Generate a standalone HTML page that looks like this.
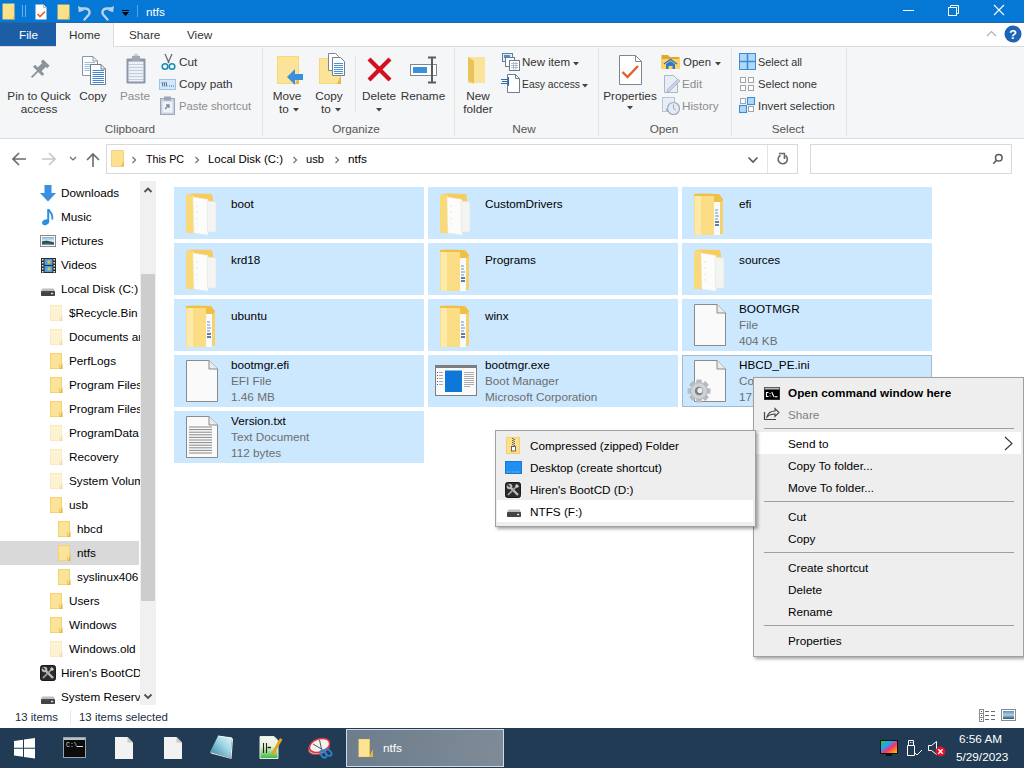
<!DOCTYPE html>
<html><head><meta charset="utf-8"><title>ntfs</title><style>
*{margin:0;padding:0;box-sizing:border-box}
html,body{width:1024px;height:768px;overflow:hidden}
body{position:relative;background:#fff;font-family:"Liberation Sans",sans-serif;font-size:12px;color:#000}
.a{position:absolute}
.t{position:absolute;white-space:nowrap;line-height:1}
</style></head><body>

<div class="a" style="left:0px;top:0px;width:1024px;height:23px;background:#0577d4"></div>
<div class="a" style="left:0px;top:22px;width:1024px;height:1px;background:#2766a6"></div>
<div class="t" style="left:146px;top:6.25px;font-size:11.75px;color:#fff;font-weight:normal;">ntfs</div>
<div class="a" style="left:903px;top:10px;width:11px;height:1px;background:#fff"></div>
<svg class="a" style="left:946px;top:3px;" width="14" height="14" viewBox="0 0 14 14"><rect x="2.5" y="4.5" width="8" height="8" fill="none" stroke="#fff"/><path d="M4.5 4.5V2.5H12.5V10.5H10.5" fill="none" stroke="#fff"/></svg>
<svg class="a" style="left:992px;top:3px;" width="14" height="14" viewBox="0 0 14 14"><path d="M2 2L12 12M12 2L2 12" stroke="#fff" stroke-width="1.1"/></svg>
<svg class="a" style="left:2px;top:3px;" width="14" height="17" viewBox="0 0 14 17"><path d="M0.5 0.5H12.5V16.5H0.5Z" fill="#f9d66c"/><path d="M1 1H12V16H1Z" fill="#fbe08a"/><path d="M12.5 10V16.5H10.5Z" fill="#e0b440"/></svg>
<div class="a" style="left:22px;top:5px;width:1px;height:12px;background:#6aaef0"></div>
<div class="a" style="left:25px;top:5px;width:1px;height:12px;background:#6aaef0"></div>
<svg class="a" style="left:35px;top:4px;" width="12" height="16" viewBox="0 0 12 16"><path d="M0.5 0.5H8.5L11.5 3.5V15.5H0.5Z" fill="#fff"/><path d="M8.5 0.5V3.5H11.5" fill="none" stroke="#aaa" stroke-width="0.8"/><path d="M2.5 10L5 12.5L10 7.5" fill="none" stroke="#e0622c" stroke-width="1.6"/></svg>
<svg class="a" style="left:57px;top:4px;" width="14" height="16" viewBox="0 0 14 16"><path d="M0.5 0.5H12.5V15.5H0.5Z" fill="#f9d66c"/><path d="M1 1H12V15H1Z" fill="#fbe08a"/><path d="M12.5 9V15.5H10.5Z" fill="#e0b440"/></svg>
<svg class="a" style="left:77px;top:4px;" width="15" height="17" viewBox="0 0 15 17"><path d="M3.5 4.5H8C12.5 4.5 13.5 8.5 11.5 11L7.5 15.5" fill="none" stroke="#b8d0ee" stroke-width="2.4" stroke-linecap="round"/><path d="M1 1.5L1.8 8.2L7 6.5Z" fill="#b8d0ee"/></svg>
<svg class="a" style="left:100px;top:4px;" width="15" height="17" viewBox="0 0 15 17"><path d="M11.5 4.5H7C2.5 4.5 1.5 8.5 3.5 11L7.5 15.5" fill="none" stroke="#b8d0ee" stroke-width="2.4" stroke-linecap="round"/><path d="M14 1.5L13.2 8.2L8 6.5Z" fill="#b8d0ee"/></svg>
<div class="a" style="left:122px;top:10px;width:7px;height:1px;background:#000"></div>
<svg class="a" style="left:122px;top:12px;" width="7" height="4" viewBox="0 0 7 4"><path d="M0 0H7L3.5 4Z" fill="#000"/></svg>
<div class="a" style="left:137px;top:5px;width:1px;height:12px;background:#5aa3ea"></div>
<div class="a" style="left:0px;top:23px;width:1024px;height:24px;background:#fff;border-bottom:1px solid #dadbdc"></div>
<div class="a" style="left:0px;top:23px;width:56px;height:23px;background:#1c5ea6"></div>
<div class="t" style="left:19px;top:29.25px;font-size:11.75px;color:#fff;font-weight:normal;">File</div>
<div class="a" style="left:56px;top:23px;width:58px;height:24px;background:#f5f6f7;border-right:1px solid #dadbdc"></div>
<div class="t" style="left:69px;top:29.25px;font-size:11.75px;color:#333;font-weight:normal;">Home</div>
<div class="t" style="left:129px;top:29.25px;font-size:11.75px;color:#333;font-weight:normal;">Share</div>
<div class="t" style="left:187px;top:29.25px;font-size:11.75px;color:#333;font-weight:normal;">View</div>
<div class="a" style="left:0px;top:47px;width:1024px;height:92px;background:#f5f6f7;border-bottom:1px solid #dadbdc"></div>
<svg class="a" style="left:28px;top:59px;" width="22" height="22" viewBox="0 0 22 22"><g transform="rotate(45 11 11)" fill="#8a949c"><rect x="6.5" y="0.5" width="9" height="3.5"/><rect x="8.3" y="3.5" width="5.4" height="7"/><rect x="4.5" y="10" width="13" height="3"/><rect x="10.1" y="12.5" width="1.8" height="9"/></g></svg>
<svg class="a" style="left:82px;top:56px;" width="25" height="30" viewBox="0 0 25 30"><path d="M0.5 0.5H11L15.5 5V19.5H0.5Z" fill="#fff" stroke="#8a96a3"/><path d="M11 0.5V5H15.5" fill="none" stroke="#8a96a3"/><g stroke="#9cbfe4"><path d="M2.5 6.5H13M2.5 8.5H13M2.5 10.5H13M2.5 12.5H13M2.5 14.5H8"/></g><path d="M8.5 8.5H19L23.5 13V28.5H8.5Z" fill="#fff" stroke="#6f7d8c"/><path d="M19 8.5V13H23.5" fill="none" stroke="#6f7d8c"/><g stroke="#3f86d6"><path d="M10.5 14.5H22M10.5 16.5H22M10.5 18.5H22M10.5 20.5H22M10.5 22.5H22M10.5 24.5H22M10.5 26.5H22"/></g></svg>
<svg class="a" style="left:125px;top:54px;" width="23" height="31" viewBox="0 0 23 31"><rect x="1.5" y="4.5" width="19" height="25" fill="#8b97a8" rx="1"/><rect x="3.5" y="7.5" width="15" height="20" fill="#eef0f7"/><g stroke="#c3cde0"><path d="M4 10.5H18M4 13.5H18M4 16.5H18M4 19.5H18M4 22.5H18M4 25.5H18"/></g><rect x="7" y="2" width="8" height="5" fill="#9ea9b8"/><circle cx="11" cy="2.5" r="2" fill="none" stroke="#9ea9b8"/></svg>
<div class="t" style="left:-61px;width:200px;text-align:center;top:90.25px;font-size:11.75px;color:#333">Pin to Quick</div>
<div class="t" style="left:-61px;width:200px;text-align:center;top:103.25px;font-size:11.75px;color:#333">access</div>
<div class="t" style="left:-7px;width:200px;text-align:center;top:90.25px;font-size:11.75px;color:#333">Copy</div>
<div class="t" style="left:35px;width:200px;text-align:center;top:90.25px;font-size:11.75px;color:#8d8d8d">Paste</div>
<svg class="a" style="left:161px;top:53px;" width="15" height="18" viewBox="0 0 15 18"><path d="M4 1L8 10M11 1L7 10" stroke="#5b6670" stroke-width="1.2"/><circle cx="4" cy="13.5" r="2.8" fill="none" stroke="#1b8bb8" stroke-width="1.6"/><circle cx="11" cy="13.5" r="2.8" fill="none" stroke="#1b8bb8" stroke-width="1.6"/></svg>
<div class="t" style="left:179px;top:56.25px;font-size:11.75px;color:#333;font-weight:normal;">Cut</div>
<svg class="a" style="left:159px;top:79px;" width="17" height="11" viewBox="0 0 17 11"><rect x="0.5" y="0.5" width="16" height="10" fill="#d6e8f8" stroke="#9ec3e6"/><path d="M3 3L4 7.5M5 3L6 7.5M7 3L8 7.5" stroke="#3b6ea8"/><path d="M10 7H11M12 7H13M14 7H15" stroke="#3b6ea8"/></svg>
<div class="t" style="left:179px;top:78.25px;font-size:11.75px;color:#333;font-weight:normal;">Copy path</div>
<svg class="a" style="left:160px;top:96px;" width="15" height="19" viewBox="0 0 15 19"><rect x="0.5" y="2.5" width="14" height="16" fill="#c9d2de" stroke="#9aa6b6"/><rect x="2.5" y="5.5" width="10" height="11" fill="#f0f2f7"/><rect x="4" y="0.5" width="7" height="4" fill="#9aa6b6"/><path d="M5 13L9 9M6 9H9V12" fill="none" stroke="#7d8a9b" stroke-width="1.4"/></svg>
<div class="t" style="left:179px;top:100.25px;font-size:11.75px;color:#8d8d8d;font-weight:normal;transform:scaleX(0.959);transform-origin:0 0;">Paste shortcut</div>
<div class="t" style="left:30px;width:200px;text-align:center;top:123.25px;font-size:11.75px;color:#555">Clipboard</div>
<div class="a" style="left:262px;top:48px;width:1px;height:88px;background:#e2e3e4"></div>
<svg class="a" style="left:276px;top:55px;" width="28" height="30" viewBox="0 0 28 30"><rect x="1" y="1" width="22" height="28" fill="#f8d775"/><rect x="2" y="2" width="20" height="26" fill="#fbe39a"/><path d="M23 20V29H19Z" fill="#e6b94a"/><path d="M11 22L19 14V19H27V25H19V30Z" fill="#3c8fdc"/></svg>
<div class="t" style="left:187px;width:200px;text-align:center;top:90.25px;font-size:11.75px;color:#333">Move</div>
<div class="t" style="left:184px;width:200px;text-align:center;top:103.25px;font-size:11.75px;color:#333">to</div>
<svg class="a" style="left:293px;top:108px;" width="6" height="4" viewBox="0 0 6 4"><path d="M0 0H6L3 3.5Z" fill="#444"/></svg>
<svg class="a" style="left:318px;top:53px;" width="28" height="32" viewBox="0 0 28 32"><rect x="1" y="5" width="22" height="26" fill="#f8d775"/><rect x="2" y="6" width="20" height="24" fill="#fbe39a"/><path d="M23 22V31H19Z" fill="#e6b94a"/><path d="M10.5 0.5H17.5L20.5 3.5V17.5H10.5Z" fill="#fff" stroke="#7d8794"/><path d="M14.5 4.5H22.5L26.5 8.5V22.5H14.5Z" fill="#fff" stroke="#6f7d8c"/><g stroke="#4a90d9"><path d="M16 10.5H25M16 12.5H25M16 14.5H25M16 16.5H25M16 18.5H25M16 20.5H25"/></g></svg>
<div class="t" style="left:229px;width:200px;text-align:center;top:90.25px;font-size:11.75px;color:#333">Copy</div>
<div class="t" style="left:226px;width:200px;text-align:center;top:103.25px;font-size:11.75px;color:#333">to</div>
<svg class="a" style="left:335px;top:108px;" width="6" height="4" viewBox="0 0 6 4"><path d="M0 0H6L3 3.5Z" fill="#444"/></svg>
<div class="a" style="left:355px;top:56px;width:1px;height:56px;background:#e2e3e4"></div>
<svg class="a" style="left:366px;top:56px;" width="27" height="27" viewBox="0 0 27 27"><path d="M3 3L24 24M24 3L3 24" stroke="#d2101e" stroke-width="4.2"/></svg>
<div class="t" style="left:279px;width:200px;text-align:center;top:90.25px;font-size:11.75px;color:#333">Delete</div>
<svg class="a" style="left:376px;top:108px;" width="6" height="4" viewBox="0 0 6 4"><path d="M0 0H6L3 3.5Z" fill="#444"/></svg>
<svg class="a" style="left:409px;top:56px;" width="31" height="28" viewBox="0 0 31 28"><rect x="1.5" y="8.5" width="26" height="11" fill="#fff" stroke="#7c8794"/><rect x="4" y="11" width="14" height="6" fill="#3b8fdc"/><path d="M19 1.5H23V26.5H19M27 1.5H23M27 26.5H23M23 1.5V26.5" fill="none" stroke="#5b5b5b" stroke-width="2"/></svg>
<div class="t" style="left:323px;width:200px;text-align:center;top:90.25px;font-size:11.75px;color:#333">Rename</div>
<div class="t" style="left:256px;width:200px;text-align:center;top:123.25px;font-size:11.75px;color:#555">Organize</div>
<div class="a" style="left:454px;top:48px;width:1px;height:88px;background:#e2e3e4"></div>
<svg class="a" style="left:466px;top:56px;" width="22" height="29" viewBox="0 0 22 29"><path d="M2 1H19V27H2Z" fill="#f8d775"/><path d="M4 1H19V27H8L4 23Z" fill="#fbe39a"/><path d="M2 1L8 5V28L2 24Z" fill="#e8c25a"/></svg>
<div class="t" style="left:378px;width:200px;text-align:center;top:90.25px;font-size:11.75px;color:#333">New</div>
<div class="t" style="left:378px;width:200px;text-align:center;top:103.25px;font-size:11.75px;color:#333">folder</div>
<svg class="a" style="left:502px;top:53px;" width="18" height="18" viewBox="0 0 18 18"><rect x="0.5" y="0.5" width="10" height="8" fill="#dfeefb" stroke="#6b7c8e"/><rect x="2" y="2" width="6" height="3" fill="#4a90d9"/><rect x="3.5" y="4.5" width="9" height="9" fill="#fff" stroke="#6b7c8e"/><rect x="7.5" y="7.5" width="10" height="10" fill="#fff" stroke="#6b7c8e"/><path d="M9 10.5H16M9 12.5H16M9 14.5H16M11.5 9V17M14 9V17" stroke="#9aa6b6" stroke-width="0.7"/></svg>
<div class="t" style="left:522px;top:56.25px;font-size:11.75px;color:#333;font-weight:normal;transform:scaleX(0.980);transform-origin:0 0;">New item</div>
<svg class="a" style="left:573px;top:62px;" width="6" height="4" viewBox="0 0 6 4"><path d="M0 0H6L3 3.5Z" fill="#444"/></svg>
<svg class="a" style="left:501px;top:74px;" width="19" height="19" viewBox="0 0 19 19"><path d="M6.5 0.5H14.5L18.5 4.5V18.5H6.5Z" fill="#fff" stroke="#6f7d8c"/><path d="M14.5 0.5V4.5H18.5" fill="none" stroke="#6f7d8c"/><path d="M0 5.5H8M1 7.5H8M0 9.5H8M7.5 3V12" stroke="#2b6cb0" stroke-width="1"/></svg>
<div class="t" style="left:522px;top:78.25px;font-size:11.75px;color:#333;font-weight:normal;transform:scaleX(0.879);transform-origin:0 0;">Easy access</div>
<svg class="a" style="left:582px;top:84px;" width="6" height="4" viewBox="0 0 6 4"><path d="M0 0H6L3 3.5Z" fill="#444"/></svg>
<div class="t" style="left:424px;width:200px;text-align:center;top:123.25px;font-size:11.75px;color:#555">New</div>
<div class="a" style="left:598px;top:48px;width:1px;height:88px;background:#e2e3e4"></div>
<svg class="a" style="left:619px;top:55px;" width="23" height="30" viewBox="0 0 23 30"><path d="M0.5 0.5H16.5L22.5 6.5V29.5H0.5Z" fill="#fff" stroke="#7d8794"/><path d="M16.5 0.5V6.5H22.5" fill="none" stroke="#7d8794"/><path d="M3.5 17L8.5 22L19 11" fill="none" stroke="#e0622c" stroke-width="2.4"/></svg>
<div class="t" style="left:530px;width:200px;text-align:center;top:90.25px;font-size:11.75px;color:#333">Properties</div>
<svg class="a" style="left:627px;top:106px;" width="6" height="4" viewBox="0 0 6 4"><path d="M0 0H6L3 3.5Z" fill="#444"/></svg>
<svg class="a" style="left:661px;top:54px;" width="19" height="16" viewBox="0 0 19 16"><path d="M0.5 1H7L9 3H18.5V15H0.5Z" fill="#e2a82e"/><rect x="0.5" y="5" width="18" height="10" fill="#fbd461"/><path d="M5 15V10L9.5 7L14 10V15H11.5V12H7.5V15Z" fill="#3579c6"/><path d="M3 10L9.5 5.5L16 10" fill="none" stroke="#3579c6" stroke-width="1.5"/></svg>
<div class="t" style="left:683px;top:56.25px;font-size:11.75px;color:#333;font-weight:normal;transform:scaleX(0.974);transform-origin:0 0;">Open</div>
<svg class="a" style="left:715px;top:62px;" width="6" height="4" viewBox="0 0 6 4"><path d="M0 0H6L3 3.5Z" fill="#444"/></svg>
<svg class="a" style="left:664px;top:75px;" width="17" height="18" viewBox="0 0 17 18"><path d="M0.5 0.5H9.5L13.5 4.5V17.5H0.5Z" fill="#e9eef6" stroke="#aab7c8"/><path d="M3 15L14 4L16 6L5 17H3Z" fill="#c8d3e2" stroke="#a1afc3" stroke-width="0.7"/></svg>
<div class="t" style="left:682px;top:78.25px;font-size:11.75px;color:#8d8d8d;font-weight:normal;">Edit</div>
<svg class="a" style="left:662px;top:97px;" width="18" height="18" viewBox="0 0 18 18"><rect x="0.5" y="0.5" width="12" height="14" fill="#e9eef6" stroke="#b9c5d4"/><circle cx="11.5" cy="11.5" r="6" fill="#e4ebf4" stroke="#9eacbf" stroke-width="1.2"/><path d="M11.5 7.5V11.5L14 13" fill="none" stroke="#9eacbf"/><path d="M4 12L6.5 14.5" stroke="#9eacbf" stroke-width="1.5"/></svg>
<div class="t" style="left:682px;top:100.25px;font-size:11.75px;color:#8d8d8d;font-weight:normal;">History</div>
<div class="t" style="left:564px;width:200px;text-align:center;top:123.25px;font-size:11.75px;color:#555">Open</div>
<div class="a" style="left:731px;top:48px;width:1px;height:88px;background:#e2e3e4"></div>
<svg class="a" style="left:739px;top:53px;" width="17" height="17" viewBox="0 0 17 17"><rect x="0.5" y="0.5" width="16" height="16" fill="#b3d8f6" stroke="#3a8ed9"/><path d="M8.5 1V16M1 8.5H16" stroke="#3a8ed9" stroke-width="1.6"/></svg>
<div class="t" style="left:758px;top:56.25px;font-size:11.75px;color:#333;font-weight:normal;transform:scaleX(0.923);transform-origin:0 0;">Select all</div>
<svg class="a" style="left:740px;top:77px;" width="15" height="15" viewBox="0 0 15 15"><g fill="#fff" stroke="#a4a4a4"><rect x="0.5" y="0.5" width="5" height="5"/><rect x="8.5" y="0.5" width="5" height="5"/><rect x="0.5" y="8.5" width="5" height="5"/><rect x="8.5" y="8.5" width="5" height="5"/></g></svg>
<div class="t" style="left:758px;top:78.25px;font-size:11.75px;color:#333;font-weight:normal;transform:scaleX(0.951);transform-origin:0 0;">Select none</div>
<svg class="a" style="left:739px;top:97px;" width="17" height="17" viewBox="0 0 17 17"><g fill="#fff" stroke="#a4a4a4"><rect x="1.5" y="1.5" width="5" height="5"/><rect x="9.5" y="9.5" width="5" height="5"/></g><g fill="#b3d8f6" stroke="#3a8ed9" stroke-width="1.1"><rect x="8.5" y="0.5" width="7" height="7"/><rect x="0.5" y="8.5" width="7" height="7"/></g></svg>
<div class="t" style="left:758px;top:100.25px;font-size:11.75px;color:#333;font-weight:normal;transform:scaleX(0.974);transform-origin:0 0;">Invert selection</div>
<div class="t" style="left:688px;width:200px;text-align:center;top:123.25px;font-size:11.75px;color:#555">Select</div>
<div class="a" style="left:846px;top:48px;width:1px;height:88px;background:#e2e3e4"></div>
<svg class="a" style="left:986px;top:30px;" width="11" height="7" viewBox="0 0 11 7"><path d="M1 6L5.5 1.5L10 6" fill="none" stroke="#b0b0b0" stroke-width="1.2"/></svg>
<svg class="a" style="left:1004px;top:25px;" width="18" height="18" viewBox="0 0 18 18"><circle cx="9" cy="9" r="8.5" fill="#1c64b4"/><text x="9" y="14" text-anchor="middle" font-family="Liberation Sans" font-weight="bold" font-size="13" fill="#fff">?</text></svg>
<div class="a" style="left:106px;top:144px;width:692px;height:30px;border:1px solid #d9d9d9;background:#fff"></div>
<div class="a" style="left:810px;top:144px;width:202px;height:30px;border:1px solid #d9d9d9;background:#fff"></div>
<svg class="a" style="left:12px;top:152px;" width="15" height="14" viewBox="0 0 15 14"><path d="M1 7H14M7 1L1 7L7 13" fill="none" stroke="#6b6b6b" stroke-width="1.6"/></svg>
<svg class="a" style="left:41px;top:152px;" width="15" height="14" viewBox="0 0 15 14"><path d="M14 7H1M8 1L14 7L8 13" fill="none" stroke="#c8c8c8" stroke-width="1.6"/></svg>
<svg class="a" style="left:69px;top:156px;" width="8" height="5" viewBox="0 0 8 5"><path d="M1 1L4 4L7 1" fill="none" stroke="#6b6b6b" stroke-width="1.2"/></svg>
<svg class="a" style="left:86px;top:152px;" width="14" height="15" viewBox="0 0 14 15"><path d="M7 15V2M1 8L7 2L13 8" fill="none" stroke="#6b6b6b" stroke-width="1.6"/></svg>
<svg class="a" style="left:111px;top:150px;" width="14" height="17" viewBox="0 0 14 17"><path d="M0.5 0.5H12.5V16.5H0.5Z" fill="#f8d775"/><path d="M1 1H12V16H1Z" fill="#fce18f"/><path d="M13 10V16.5H10Z" fill="#e6ba4c"/><path d="M0.5 0.5H12.5V16.5H0.5Z" fill="none" stroke="#e7c35e" stroke-width="0.6"/></svg>
<svg class="a" style="left:131px;top:156px;" width="6" height="8" viewBox="0 0 6 8"><path d="M1.5 1L4.5 4L1.5 7" fill="none" stroke="#777" stroke-width="1.3"/></svg>
<svg class="a" style="left:194px;top:156px;" width="6" height="8" viewBox="0 0 6 8"><path d="M1.5 1L4.5 4L1.5 7" fill="none" stroke="#777" stroke-width="1.3"/></svg>
<svg class="a" style="left:292px;top:156px;" width="6" height="8" viewBox="0 0 6 8"><path d="M1.5 1L4.5 4L1.5 7" fill="none" stroke="#777" stroke-width="1.3"/></svg>
<svg class="a" style="left:334px;top:156px;" width="6" height="8" viewBox="0 0 6 8"><path d="M1.5 1L4.5 4L1.5 7" fill="none" stroke="#777" stroke-width="1.3"/></svg>
<svg class="a" style="left:747px;top:156px;" width="12" height="8" viewBox="0 0 12 8"><path d="M1.5 1.5L6 6L10.5 1.5" fill="none" stroke="#5a5a5a" stroke-width="1.6"/></svg>
<div class="a" style="left:767px;top:145px;width:1px;height:28px;background:#e3e3e3"></div>
<svg class="a" style="left:775px;top:151px;" width="16" height="17" viewBox="0 0 16 17"><path d="M5.5 4.2A4.6 4.6 0 1 0 10.5 4.5" fill="none" stroke="#6a6a6a" stroke-width="1.6"/><path d="M4 2.5H9.5V8" fill="none" stroke="#6a6a6a" stroke-width="1.6"/></svg>
<svg class="a" style="left:990px;top:151px;" width="14" height="15" viewBox="0 0 14 15"><circle cx="8.8" cy="6.8" r="3.3" fill="none" stroke="#5a5a5a" stroke-width="1.5"/><path d="M6.5 9.3L3.3 12.8" stroke="#5a5a5a" stroke-width="1.6"/></svg>
<div class="t" style="left:146px;top:153.25px;font-size:11.75px;color:#000;font-weight:normal;transform:scaleX(0.909);transform-origin:0 0;">This PC</div>
<div class="t" style="left:208px;top:153.25px;font-size:11.75px;color:#000;font-weight:normal;transform:scaleX(0.974);transform-origin:0 0;">Local Disk (C:)</div>
<div class="t" style="left:306px;top:153.25px;font-size:11.75px;color:#000;font-weight:normal;transform:scaleX(0.950);transform-origin:0 0;">usb</div>
<div class="t" style="left:348px;top:153.25px;font-size:11.75px;color:#000;font-weight:normal;">ntfs</div>
<div class="a" style="left:0;top:181px;width:140px;height:524px;overflow:hidden">
<svg class="a" style="left:40px;top:4px;" width="16" height="17" viewBox="0 0 16 17"><path d="M4.5 0H11.5V8H16L8 16.5L0 8H4.5Z" fill="#3b8ee0"/></svg>
<div class="t" style="left:61px;top:6.25px;font-size:11.75px;color:#000;font-weight:normal;">Downloads</div>
<svg class="a" style="left:41px;top:27px;" width="14" height="18" viewBox="0 0 14 18"><ellipse cx="4.6" cy="14.3" rx="3.6" ry="2.7" transform="rotate(-25 4.6 14.3)" fill="#2d8ee0"/><path d="M7.2 14V1.2" stroke="#2d8ee0" stroke-width="2"/><path d="M7.4 1.2C8.5 4 12.5 5.5 11.2 11.5" fill="none" stroke="#2d8ee0" stroke-width="1.9"/></svg>
<div class="t" style="left:61px;top:30.25px;font-size:11.75px;color:#000;font-weight:normal;">Music</div>
<svg class="a" style="left:40px;top:54px;" width="16" height="12" viewBox="0 0 16 12"><defs><linearGradient id="pg" x1="0" y1="0" x2="0" y2="1"><stop offset="0" stop-color="#7fb0d8"/><stop offset=".45" stop-color="#d8ecf4"/><stop offset="1" stop-color="#8fb0b0"/></linearGradient></defs><rect x="0.5" y="0.5" width="15" height="11" fill="#fafafa" stroke="#8a8a8a"/><rect x="2" y="2" width="12" height="8" fill="url(#pg)"/><path d="M2 6.5C5 5 8 5.5 14 7.5V10H2Z" fill="#2d4d55"/><path d="M2 9C6 8 10 8.5 14 9.3V10H2Z" fill="#6f9090"/></svg>
<div class="t" style="left:61px;top:54.25px;font-size:11.75px;color:#000;font-weight:normal;">Pictures</div>
<svg class="a" style="left:41px;top:77px;" width="15" height="15" viewBox="0 0 15 15"><rect x="0" y="0" width="15" height="15" fill="#2b2b2b"/><g fill="#e8e8e8"><rect x="1" y="1" width="1.5" height="1.5"/><rect x="1" y="4" width="1.5" height="1.5"/><rect x="1" y="7" width="1.5" height="1.5"/><rect x="1" y="10" width="1.5" height="1.5"/><rect x="1" y="13" width="1.5" height="1.5"/><rect x="12.5" y="1" width="1.5" height="1.5"/><rect x="12.5" y="4" width="1.5" height="1.5"/><rect x="12.5" y="7" width="1.5" height="1.5"/><rect x="12.5" y="10" width="1.5" height="1.5"/><rect x="12.5" y="13" width="1.5" height="1.5"/></g><rect x="3.5" y="1" width="8" height="6" fill="#4aa0e8"/><rect x="3.5" y="8" width="8" height="6" fill="#4aa0e8"/><circle cx="8" cy="4" r="1.8" fill="#d8c040"/><circle cx="8" cy="11" r="1.8" fill="#d8c040"/></svg>
<div class="t" style="left:61px;top:78.25px;font-size:11.75px;color:#000;font-weight:normal;">Videos</div>
<svg class="a" style="left:41px;top:107px;" width="14" height="8" viewBox="0 0 14 8"><path d="M1.5 0.5H12.5L13.8 3H0.2Z" fill="#bdbdbd"/><rect x="0" y="3" width="14" height="5" rx="0.8" fill="#434343"/><rect x="10" y="4.8" width="2.2" height="1.4" fill="#e0e0e0"/><path d="M1 4H9" stroke="#5a5a5a" stroke-width="0.6"/></svg>
<div class="t" style="left:61px;top:102.25px;font-size:11.75px;color:#000;font-weight:normal;">Local Disk (C:)</div>
<svg class="a" style="left:50px;top:124px;" width="13" height="16" viewBox="0 0 13 16"><g opacity="0.45"><path d="M0 0H12V16H0Z" fill="#f5cf63"/><path d="M0.8 0.8H11.2V15.2H0.8Z" fill="#fbe39a"/><path d="M12.5 9.5V16H10Z" fill="#e4b545"/><path d="M9.5 11V16" stroke="#e9c25a" stroke-width="0.8"/></g></svg>
<div class="t" style="left:69px;top:126.25px;font-size:11.75px;color:#000;font-weight:normal;">$Recycle.Bin</div>
<svg class="a" style="left:50px;top:148px;" width="13" height="16" viewBox="0 0 13 16"><g opacity="0.45"><path d="M0 0H12V16H0Z" fill="#f5cf63"/><path d="M0.8 0.8H11.2V15.2H0.8Z" fill="#fbe39a"/><path d="M12.5 9.5V16H10Z" fill="#e4b545"/><path d="M9.5 11V16" stroke="#e9c25a" stroke-width="0.8"/></g></svg>
<div class="t" style="left:69px;top:150.25px;font-size:11.75px;color:#000;font-weight:normal;">Documents and Settings</div>
<svg class="a" style="left:50px;top:172px;" width="13" height="16" viewBox="0 0 13 16"><g opacity="1"><path d="M0 0H12V16H0Z" fill="#f5cf63"/><path d="M0.8 0.8H11.2V15.2H0.8Z" fill="#fbe39a"/><path d="M12.5 9.5V16H10Z" fill="#e4b545"/><path d="M9.5 11V16" stroke="#e9c25a" stroke-width="0.8"/></g></svg>
<div class="t" style="left:69px;top:174.25px;font-size:11.75px;color:#000;font-weight:normal;">PerfLogs</div>
<svg class="a" style="left:50px;top:196px;" width="13" height="16" viewBox="0 0 13 16"><g opacity="1"><path d="M0 0H12V16H0Z" fill="#f5cf63"/><path d="M0.8 0.8H11.2V15.2H0.8Z" fill="#fbe39a"/><path d="M12.5 9.5V16H10Z" fill="#e4b545"/><path d="M9.5 11V16" stroke="#e9c25a" stroke-width="0.8"/></g></svg>
<div class="t" style="left:69px;top:198.25px;font-size:11.75px;color:#000;font-weight:normal;">Program Files</div>
<svg class="a" style="left:50px;top:220px;" width="13" height="16" viewBox="0 0 13 16"><g opacity="1"><path d="M0 0H12V16H0Z" fill="#f5cf63"/><path d="M0.8 0.8H11.2V15.2H0.8Z" fill="#fbe39a"/><path d="M12.5 9.5V16H10Z" fill="#e4b545"/><path d="M9.5 11V16" stroke="#e9c25a" stroke-width="0.8"/></g></svg>
<div class="t" style="left:69px;top:222.25px;font-size:11.75px;color:#000;font-weight:normal;">Program Files (x86)</div>
<svg class="a" style="left:50px;top:244px;" width="13" height="16" viewBox="0 0 13 16"><g opacity="0.45"><path d="M0 0H12V16H0Z" fill="#f5cf63"/><path d="M0.8 0.8H11.2V15.2H0.8Z" fill="#fbe39a"/><path d="M12.5 9.5V16H10Z" fill="#e4b545"/><path d="M9.5 11V16" stroke="#e9c25a" stroke-width="0.8"/></g></svg>
<div class="t" style="left:69px;top:246.25px;font-size:11.75px;color:#000;font-weight:normal;">ProgramData</div>
<svg class="a" style="left:50px;top:268px;" width="13" height="16" viewBox="0 0 13 16"><g opacity="0.45"><path d="M0 0H12V16H0Z" fill="#f5cf63"/><path d="M0.8 0.8H11.2V15.2H0.8Z" fill="#fbe39a"/><path d="M12.5 9.5V16H10Z" fill="#e4b545"/><path d="M9.5 11V16" stroke="#e9c25a" stroke-width="0.8"/></g></svg>
<div class="t" style="left:69px;top:270.25px;font-size:11.75px;color:#000;font-weight:normal;">Recovery</div>
<svg class="a" style="left:50px;top:292px;" width="13" height="16" viewBox="0 0 13 16"><g opacity="0.45"><path d="M0 0H12V16H0Z" fill="#f5cf63"/><path d="M0.8 0.8H11.2V15.2H0.8Z" fill="#fbe39a"/><path d="M12.5 9.5V16H10Z" fill="#e4b545"/><path d="M9.5 11V16" stroke="#e9c25a" stroke-width="0.8"/></g></svg>
<div class="t" style="left:69px;top:294.25px;font-size:11.75px;color:#000;font-weight:normal;">System Volume Information</div>
<svg class="a" style="left:50px;top:316px;" width="13" height="16" viewBox="0 0 13 16"><g opacity="1"><path d="M0 0H12V16H0Z" fill="#f5cf63"/><path d="M0.8 0.8H11.2V15.2H0.8Z" fill="#fbe39a"/><path d="M12.5 9.5V16H10Z" fill="#e4b545"/><path d="M9.5 11V16" stroke="#e9c25a" stroke-width="0.8"/></g></svg>
<div class="t" style="left:69px;top:318.25px;font-size:11.75px;color:#000;font-weight:normal;">usb</div>
<svg class="a" style="left:58px;top:340px;" width="13" height="16" viewBox="0 0 13 16"><g opacity="1"><path d="M0 0H12V16H0Z" fill="#f5cf63"/><path d="M0.8 0.8H11.2V15.2H0.8Z" fill="#fbe39a"/><path d="M12.5 9.5V16H10Z" fill="#e4b545"/><path d="M9.5 11V16" stroke="#e9c25a" stroke-width="0.8"/></g></svg>
<div class="t" style="left:77px;top:342.25px;font-size:11.75px;color:#000;font-weight:normal;">hbcd</div>
<div class="a" style="left:0px;top:360px;width:139px;height:24px;background:#d9d9d9"></div>
<svg class="a" style="left:58px;top:364px;" width="13" height="16" viewBox="0 0 13 16"><g opacity="1"><path d="M0 0H12V16H0Z" fill="#f5cf63"/><path d="M0.8 0.8H11.2V15.2H0.8Z" fill="#fbe39a"/><path d="M12.5 9.5V16H10Z" fill="#e4b545"/><path d="M9.5 11V16" stroke="#e9c25a" stroke-width="0.8"/></g></svg>
<div class="t" style="left:77px;top:366.25px;font-size:11.75px;color:#000;font-weight:normal;">ntfs</div>
<svg class="a" style="left:58px;top:388px;" width="13" height="16" viewBox="0 0 13 16"><g opacity="1"><path d="M0 0H12V16H0Z" fill="#f5cf63"/><path d="M0.8 0.8H11.2V15.2H0.8Z" fill="#fbe39a"/><path d="M12.5 9.5V16H10Z" fill="#e4b545"/><path d="M9.5 11V16" stroke="#e9c25a" stroke-width="0.8"/></g></svg>
<div class="t" style="left:77px;top:390.25px;font-size:11.75px;color:#000;font-weight:normal;">syslinux406</div>
<svg class="a" style="left:50px;top:412px;" width="13" height="16" viewBox="0 0 13 16"><g opacity="1"><path d="M0 0H12V16H0Z" fill="#f5cf63"/><path d="M0.8 0.8H11.2V15.2H0.8Z" fill="#fbe39a"/><path d="M12.5 9.5V16H10Z" fill="#e4b545"/><path d="M9.5 11V16" stroke="#e9c25a" stroke-width="0.8"/></g></svg>
<div class="t" style="left:69px;top:414.25px;font-size:11.75px;color:#000;font-weight:normal;">Users</div>
<svg class="a" style="left:50px;top:436px;" width="13" height="16" viewBox="0 0 13 16"><g opacity="1"><path d="M0 0H12V16H0Z" fill="#f5cf63"/><path d="M0.8 0.8H11.2V15.2H0.8Z" fill="#fbe39a"/><path d="M12.5 9.5V16H10Z" fill="#e4b545"/><path d="M9.5 11V16" stroke="#e9c25a" stroke-width="0.8"/></g></svg>
<div class="t" style="left:69px;top:438.25px;font-size:11.75px;color:#000;font-weight:normal;">Windows</div>
<svg class="a" style="left:50px;top:460px;" width="13" height="16" viewBox="0 0 13 16"><g opacity="0.45"><path d="M0 0H12V16H0Z" fill="#f5cf63"/><path d="M0.8 0.8H11.2V15.2H0.8Z" fill="#fbe39a"/><path d="M12.5 9.5V16H10Z" fill="#e4b545"/><path d="M9.5 11V16" stroke="#e9c25a" stroke-width="0.8"/></g></svg>
<div class="t" style="left:69px;top:462.25px;font-size:11.75px;color:#000;font-weight:normal;">Windows.old</div>
<svg class="a" style="left:40px;top:484px;" width="16" height="16" viewBox="0 0 16 16"><rect x="0.5" y="0.5" width="15" height="15" rx="2" fill="#2c2c2c" stroke="#1a1a1a"/><path d="M5 5L13 13" stroke="#bdbdbd" stroke-width="2.4"/><circle cx="4.5" cy="4.5" r="2.8" fill="#bdbdbd"/><path d="M2.5 2.5L4.8 4.8" stroke="#2c2c2c" stroke-width="1.6"/><path d="M13 3L3 13" stroke="#a8a8a8" stroke-width="1.6"/><path d="M11.5 2L14 4.5L12 6L10 4Z" fill="#d0d0d0"/></svg>
<div class="t" style="left:61px;top:486.25px;font-size:11.75px;color:#000;font-weight:normal;">Hiren's BootCD (D:)</div>
<svg class="a" style="left:41px;top:515px;" width="14" height="8" viewBox="0 0 14 8"><path d="M1.5 0.5H12.5L13.8 3H0.2Z" fill="#bdbdbd"/><rect x="0" y="3" width="14" height="5" rx="0.8" fill="#434343"/><rect x="10" y="4.8" width="2.2" height="1.4" fill="#e0e0e0"/><path d="M1 4H9" stroke="#5a5a5a" stroke-width="0.6"/></svg>
<div class="t" style="left:61px;top:510.25px;font-size:11.75px;color:#000;font-weight:normal;">System Reserved (E:)</div>
</div>
<div class="a" style="left:140px;top:181px;width:16px;height:524px;background:#f0f0f0"></div>
<div class="a" style="left:141px;top:274px;width:14px;height:327px;background:#cdcdcd"></div>
<svg class="a" style="left:143px;top:186px;" width="10" height="7" viewBox="0 0 10 7"><path d="M1.5 6L5 2.5L8.5 6" fill="none" stroke="#505050" stroke-width="1.8"/></svg>
<svg class="a" style="left:143px;top:693px;" width="10" height="7" viewBox="0 0 10 7"><path d="M1.5 1.5L5 5L8.5 1.5" fill="none" stroke="#505050" stroke-width="1.8"/></svg>
<div class="a" style="left:174px;top:187px;width:250px;height:52px;background:#cce8ff"></div>
<svg class="a" style="left:185px;top:192px;" width="36" height="46" viewBox="0 0 36 46"><path d="M1 3L8 1.5L27 2L28 7V40L1 40.5Z" fill="#f6cd5c"/><path d="M1 3H9V41.5L1 40.5Z" fill="#fad978"/><path d="M8 5L23 7.5V43L9 41Z" fill="#fcfcfa" stroke="#ebebe6" stroke-width="0.6"/><path d="M22 9L31 10V40L22.5 40Z" fill="#f4f4f2" stroke="#e4e4e0" stroke-width="0.6"/><g stroke="#d8d8d8" stroke-width="0.6"><path d="M11 14H13M11 20H13M11 26H13M11 32H13"/></g></svg>
<div class="t" style="left:231px;top:198.25px;font-size:11.75px;color:#000;font-weight:normal;">boot</div>
<div class="a" style="left:428px;top:187px;width:250px;height:52px;background:#cce8ff"></div>
<svg class="a" style="left:439px;top:192px;" width="36" height="46" viewBox="0 0 36 46"><path d="M1 3L8 1.5L27 2L28 7V40L1 40.5Z" fill="#f6cd5c"/><path d="M1 3H9V41.5L1 40.5Z" fill="#fad978"/><path d="M8 5L23 7.5V43L9 41Z" fill="#fcfcfa" stroke="#ebebe6" stroke-width="0.6"/><path d="M22 9L31 10V40L22.5 40Z" fill="#f4f4f2" stroke="#e4e4e0" stroke-width="0.6"/><g stroke="#d8d8d8" stroke-width="0.6"><path d="M11 14H13M11 20H13M11 26H13M11 32H13"/></g></svg>
<div class="t" style="left:485px;top:198.25px;font-size:11.75px;color:#000;font-weight:normal;">CustomDrivers</div>
<div class="a" style="left:682px;top:187px;width:250px;height:52px;background:#cce8ff"></div>
<svg class="a" style="left:693px;top:192px;" width="36" height="46" viewBox="0 0 36 46"><path d="M1 2L8 1.5L26 2L30 7V42H1Z" fill="#f0c044"/><path d="M1 4H21V43H1Z" fill="#fbdd85"/><path d="M2 4H8V43H2Z" fill="#fde9a9"/><path d="M21 10H27V43H21Z" fill="#fafafa"/><path d="M22 18H25M22 21H25M22 24H26M22 27H25" stroke="#6a8fb8" stroke-width="1.2"/><path d="M22 30H26M22 33H26" stroke="#2a5a8a" stroke-width="1.5"/><path d="M27 10L30 8V42H27Z" fill="#f6d26c"/></svg>
<div class="t" style="left:739px;top:198.25px;font-size:11.75px;color:#000;font-weight:normal;">efi</div>
<div class="a" style="left:174px;top:243px;width:250px;height:52px;background:#cce8ff"></div>
<svg class="a" style="left:185px;top:248px;" width="36" height="46" viewBox="0 0 36 46"><path d="M1 3L8 1.5L27 2L28 7V40L1 40.5Z" fill="#f6cd5c"/><path d="M1 3H9V41.5L1 40.5Z" fill="#fad978"/><path d="M8 5L23 7.5V43L9 41Z" fill="#fcfcfa" stroke="#ebebe6" stroke-width="0.6"/><path d="M22 9L31 10V40L22.5 40Z" fill="#f4f4f2" stroke="#e4e4e0" stroke-width="0.6"/><g stroke="#d8d8d8" stroke-width="0.6"><path d="M11 14H13M11 20H13M11 26H13M11 32H13"/></g></svg>
<div class="t" style="left:231px;top:254.25px;font-size:11.75px;color:#000;font-weight:normal;">krd18</div>
<div class="a" style="left:428px;top:243px;width:250px;height:52px;background:#cce8ff"></div>
<svg class="a" style="left:439px;top:248px;" width="36" height="46" viewBox="0 0 36 46"><path d="M1 2L8 1.5L26 2L30 7V42H1Z" fill="#f0c044"/><path d="M1 4H21V43H1Z" fill="#fbdd85"/><path d="M2 4H8V43H2Z" fill="#fde9a9"/><path d="M21 10H27V43H21Z" fill="#fafafa"/><path d="M22 18H25M22 21H25M22 24H26M22 27H25" stroke="#6a8fb8" stroke-width="1.2"/><path d="M22 30H26M22 33H26" stroke="#2a5a8a" stroke-width="1.5"/><path d="M27 10L30 8V42H27Z" fill="#f6d26c"/></svg>
<div class="t" style="left:485px;top:254.25px;font-size:11.75px;color:#000;font-weight:normal;">Programs</div>
<div class="a" style="left:682px;top:243px;width:250px;height:52px;background:#cce8ff"></div>
<svg class="a" style="left:693px;top:248px;" width="36" height="46" viewBox="0 0 36 46"><path d="M1 3L8 1.5L27 2L28 7V40L1 40.5Z" fill="#f6cd5c"/><path d="M1 3H9V41.5L1 40.5Z" fill="#fad978"/><path d="M8 5L23 7.5V43L9 41Z" fill="#fcfcfa" stroke="#ebebe6" stroke-width="0.6"/><path d="M22 9L31 10V40L22.5 40Z" fill="#f4f4f2" stroke="#e4e4e0" stroke-width="0.6"/><g stroke="#d8d8d8" stroke-width="0.6"><path d="M11 14H13M11 20H13M11 26H13M11 32H13"/></g></svg>
<div class="t" style="left:739px;top:254.25px;font-size:11.75px;color:#000;font-weight:normal;">sources</div>
<div class="a" style="left:174px;top:299px;width:250px;height:52px;background:#cce8ff"></div>
<svg class="a" style="left:185px;top:304px;" width="36" height="46" viewBox="0 0 36 46"><path d="M1 2L8 1.5L26 2L30 7V42H1Z" fill="#f0c044"/><path d="M1 4H21V43H1Z" fill="#fbdd85"/><path d="M2 4H8V43H2Z" fill="#fde9a9"/><path d="M21 10H27V43H21Z" fill="#fafafa"/><path d="M22 18H25M22 21H25M22 24H26M22 27H25" stroke="#6a8fb8" stroke-width="1.2"/><path d="M22 30H26M22 33H26" stroke="#2a5a8a" stroke-width="1.5"/><path d="M27 10L30 8V42H27Z" fill="#f6d26c"/></svg>
<div class="t" style="left:231px;top:310.25px;font-size:11.75px;color:#000;font-weight:normal;">ubuntu</div>
<div class="a" style="left:428px;top:299px;width:250px;height:52px;background:#cce8ff"></div>
<svg class="a" style="left:439px;top:304px;" width="36" height="46" viewBox="0 0 36 46"><path d="M1 2L8 1.5L26 2L30 7V42H1Z" fill="#f0c044"/><path d="M1 4H21V43H1Z" fill="#fbdd85"/><path d="M2 4H8V43H2Z" fill="#fde9a9"/><path d="M21 10H27V43H21Z" fill="#fafafa"/><path d="M22 18H25M22 21H25M22 24H26M22 27H25" stroke="#6a8fb8" stroke-width="1.2"/><path d="M22 30H26M22 33H26" stroke="#2a5a8a" stroke-width="1.5"/><path d="M27 10L30 8V42H27Z" fill="#f6d26c"/></svg>
<div class="t" style="left:485px;top:310.25px;font-size:11.75px;color:#000;font-weight:normal;">winx</div>
<div class="a" style="left:682px;top:299px;width:250px;height:52px;background:#cce8ff"></div>
<svg class="a" style="left:693px;top:303px;" width="34" height="44" viewBox="0 0 34 44"><path d="M1.5 1.5H24L32.5 10V42.5H1.5Z" fill="#fafafa" stroke="#8a8a8a"/><path d="M24 1.5V10H32.5" fill="#ececec" stroke="#8a8a8a"/></svg>
<div class="t" style="left:739px;top:303.25px;font-size:11.75px;color:#000;font-weight:normal;">BOOTMGR</div>
<div class="t" style="left:739px;top:319.25px;font-size:11.75px;color:#6d6d6d;font-weight:normal;">File</div>
<div class="t" style="left:739px;top:335.25px;font-size:11.75px;color:#6d6d6d;font-weight:normal;">404 KB</div>
<div class="a" style="left:174px;top:355px;width:250px;height:52px;background:#cce8ff"></div>
<svg class="a" style="left:185px;top:359px;" width="34" height="44" viewBox="0 0 34 44"><path d="M1.5 1.5H24L32.5 10V42.5H1.5Z" fill="#fafafa" stroke="#8a8a8a"/><path d="M24 1.5V10H32.5" fill="#ececec" stroke="#8a8a8a"/></svg>
<div class="t" style="left:231px;top:359.25px;font-size:11.75px;color:#000;font-weight:normal;">bootmgr.efi</div>
<div class="t" style="left:231px;top:375.25px;font-size:11.75px;color:#6d6d6d;font-weight:normal;">EFI File</div>
<div class="t" style="left:231px;top:391.25px;font-size:11.75px;color:#6d6d6d;font-weight:normal;">1.46 MB</div>
<div class="a" style="left:428px;top:355px;width:250px;height:52px;background:#cce8ff"></div>
<svg class="a" style="left:435px;top:365px;" width="43" height="32" viewBox="0 0 43 32"><rect x="0.5" y="0.5" width="41" height="30" fill="#fafafa" stroke="#7d7d7d"/><rect x="0.5" y="0.5" width="41" height="2.5" fill="#7d7d7d"/><rect x="10" y="5.5" width="17" height="21.5" fill="#0d78d8"/><g stroke="#8a8a8a" stroke-width="0.7"><path d="M29 7.5H39M29 9.5H39M29 11.5H39M29 13.5H39M29 15.5H39M29 17.5H39M29 19.5H39M29 21.5H35"/><path d="M4 7.5H8M4 10.5H8M4 13.5H8M4 16.5H8M4 19.5H8"/></g><g fill="#555"><rect x="2" y="7" width="1" height="1"/><rect x="2" y="10" width="1" height="1"/><rect x="2" y="13" width="1" height="1"/><rect x="2" y="16" width="1" height="1"/><rect x="2" y="19" width="1" height="1"/></g></svg>
<div class="t" style="left:485px;top:359.25px;font-size:11.75px;color:#000;font-weight:normal;">bootmgr.exe</div>
<div class="t" style="left:485px;top:375.25px;font-size:11.75px;color:#6d6d6d;font-weight:normal;">Boot Manager</div>
<div class="t" style="left:485px;top:391.25px;font-size:11.75px;color:#6d6d6d;font-weight:normal;">Microsoft Corporation</div>
<div class="a" style="left:682px;top:355px;width:250px;height:52px;background:#cce8ff;border:1px solid #a3b9cf"></div>
<svg class="a" style="left:693px;top:359px;" width="34" height="44" viewBox="0 0 34 44"><path d="M1.5 1.5H24L32.5 10V42.5H1.5Z" fill="#fafafa" stroke="#8a8a8a"/><path d="M24 1.5V10H32.5" fill="#ececec" stroke="#8a8a8a"/></svg>
<svg class="a" style="left:686px;top:378px;" width="26" height="26" viewBox="0 0 26 26"><g transform="translate(13 13)"><g fill="#b8bcc1"><rect x="-2.8" y="-11.5" width="5.6" height="6" rx="1" transform="rotate(0)"/><rect x="-2.8" y="-11.5" width="5.6" height="6" rx="1" transform="rotate(45)"/><rect x="-2.8" y="-11.5" width="5.6" height="6" rx="1" transform="rotate(90)"/><rect x="-2.8" y="-11.5" width="5.6" height="6" rx="1" transform="rotate(135)"/><rect x="-2.8" y="-11.5" width="5.6" height="6" rx="1" transform="rotate(180)"/><rect x="-2.8" y="-11.5" width="5.6" height="6" rx="1" transform="rotate(225)"/><rect x="-2.8" y="-11.5" width="5.6" height="6" rx="1" transform="rotate(270)"/><rect x="-2.8" y="-11.5" width="5.6" height="6" rx="1" transform="rotate(315)"/></g><circle r="8.3" fill="#cfd2d6"/><circle r="8.3" fill="none" stroke="#b0b4b9" stroke-width="0.8"/><circle r="4.2" fill="#7d8187"/><circle cx="1" cy="-0.6" r="2.6" fill="#eeeeee"/></g></svg>
<div class="t" style="left:739px;top:359.25px;font-size:11.75px;color:#000;font-weight:normal;">HBCD_PE.ini</div>
<div class="t" style="left:739px;top:375.25px;font-size:11.75px;color:#6d6d6d;font-weight:normal;">Configuration settings</div>
<div class="t" style="left:739px;top:391.25px;font-size:11.75px;color:#6d6d6d;font-weight:normal;">17.0 KB</div>
<div class="a" style="left:174px;top:411px;width:250px;height:52px;background:#cce8ff"></div>
<svg class="a" style="left:185px;top:415px;" width="34" height="44" viewBox="0 0 34 44"><path d="M1.5 1.5H24L32.5 10V42.5H1.5Z" fill="#fafafa" stroke="#8a8a8a"/><path d="M24 1.5V10H32.5" fill="#ececec" stroke="#8a8a8a"/><g stroke="#7a7a7a" stroke-width="0.9"><path d="M4 12.0H27"/><path d="M4 14.6H27"/><path d="M4 17.2H27"/><path d="M4 19.8H27"/><path d="M4 22.4H27"/><path d="M4 25.0H27"/><path d="M4 27.6H27"/><path d="M4 30.2H27"/><path d="M4 32.8H27"/><path d="M4 35.4H27"/><path d="M4 38.0H27"/></g></svg>
<div class="t" style="left:231px;top:415.25px;font-size:11.75px;color:#000;font-weight:normal;">Version.txt</div>
<div class="t" style="left:231px;top:431.25px;font-size:11.75px;color:#6d6d6d;font-weight:normal;">Text Document</div>
<div class="t" style="left:231px;top:447.25px;font-size:11.75px;color:#6d6d6d;font-weight:normal;">112 bytes</div>
<div class="t" style="left:15px;top:711.25px;font-size:11.75px;color:#1e2a48;font-weight:normal;transform:scaleX(0.968);transform-origin:0 0;">13 items</div>
<div class="a" style="left:70px;top:710px;width:1px;height:14px;background:#e8e8e8"></div>
<div class="t" style="left:79px;top:711.25px;font-size:11.75px;color:#1e2a48;font-weight:normal;transform:scaleX(0.973);transform-origin:0 0;">13 items selected</div>
<svg class="a" style="left:979px;top:709px;" width="17" height="13" viewBox="0 0 17 13"><rect x="0.5" y="0.5" width="4" height="12" fill="#fff" stroke="#8a8a8a"/><path d="M1 4.5H4M1 8.5H4" stroke="#8a8a8a"/><rect x="2" y="2" width="1" height="1" fill="#444"/><rect x="2" y="6" width="1" height="1" fill="#444"/><rect x="2" y="10" width="1" height="1" fill="#444"/><path d="M6 2.5H10M12 2.5H16M6 6.5H10M12 6.5H16M6 10.5H10M12 10.5H16" stroke="#6a6a6a"/></svg>
<svg class="a" style="left:1001px;top:709px;" width="16" height="13" viewBox="0 0 16 13"><rect x="0.5" y="0.5" width="14" height="11" fill="#fff" stroke="#8a8a8a"/><defs><linearGradient id="lg2" x1="0" y1="0" x2="0" y2="1"><stop offset="0" stop-color="#5b8fc8"/><stop offset=".5" stop-color="#a8d0e8"/><stop offset="1" stop-color="#2f4f5f"/></linearGradient></defs><rect x="2" y="2" width="11" height="8" fill="url(#lg2)"/></svg>
<div class="a" style="left:0px;top:728px;width:1024px;height:40px;background:#203b53"></div>
<div class="a" style="left:346px;top:729px;width:158px;height:38px;background:linear-gradient(100deg,#6d7d8c,#7f8b97);border:1px solid #cfdbe6"></div>
<div class="t" style="left:383px;top:742.25px;font-size:11.75px;color:#fff;font-weight:normal;">ntfs</div>
<svg class="a" style="left:358px;top:738px;" width="16" height="20" viewBox="0 0 16 20"><path d="M0.5 1H12V19H0.5Z" fill="#f5cf63"/><path d="M1 1.5H11.5V18.5H1Z" fill="#fde392"/><path d="M15 11V19H11Z" fill="#e3b544"/><path d="M11.5 1V19" stroke="#e9c25a"/></svg>
<svg class="a" style="left:14px;top:738px;" width="21" height="21" viewBox="0 0 21 21"><path d="M0 3L9 1.7V9.7H0Z M10 1.5L21 0V9.7H10Z M0 10.7H9V18.7L0 17.5Z M10 10.7H21V20.5L10 19Z" fill="#fff"/></svg>
<svg class="a" style="left:63px;top:737px;" width="23" height="21" viewBox="0 0 23 21"><rect x="0.5" y="0.5" width="22" height="20" fill="#0c0c0c" stroke="#9aa3ad"/><rect x="1" y="1" width="21" height="2" fill="#b8c0c8"/><text x="3" y="10" font-family="Liberation Mono" font-size="6.5" fill="#ddd">C:\</text><path d="M14 9.5H20" stroke="#ddd"/></svg>
<svg class="a" style="left:115px;top:737px;" width="18" height="22" viewBox="0 0 18 22"><path d="M0 0H12.5L18 5.5V22H0Z" fill="#f2f2f2"/><path d="M12.5 0V5.5H18Z" fill="#c8c8c8"/></svg>
<svg class="a" style="left:164px;top:737px;" width="18" height="22" viewBox="0 0 18 22"><path d="M0 0H12.5L18 5.5V22H0Z" fill="#f2f2f2"/><path d="M12.5 0V5.5H18Z" fill="#c8c8c8"/></svg>
<svg class="a" style="left:208px;top:734px;" width="27" height="27" viewBox="0 0 27 27"><defs><linearGradient id="npg" x1="0" y1="1" x2="1" y2="0"><stop offset="0" stop-color="#2f7f9a"/><stop offset=".6" stop-color="#9fd6e6"/><stop offset="1" stop-color="#e8f6fa"/></linearGradient></defs><path d="M10 2L24 4L22.5 24L2 18Z" fill="url(#npg)"/><path d="M24 4L25 5L23.5 25L22.5 24Z" fill="#f0f0f0"/><path d="M2 18L22.5 24L23.5 25L3 19.5Z" fill="#e8e8e8"/><path d="M10 2L24 4" stroke="#f4fbfd" stroke-width="1.2"/></svg>
<svg class="a" style="left:258px;top:735px;" width="26" height="25" viewBox="0 0 26 25"><defs><linearGradient id="nppg" x1="0" y1="0" x2="0" y2="1"><stop offset="0" stop-color="#f6f6f6"/><stop offset=".45" stop-color="#e8f2d8"/><stop offset="1" stop-color="#3cb83c"/></linearGradient></defs><path d="M2 1.5H16L20 5.5V23.5H2Z" fill="url(#nppg)" stroke="#e6efe0"/><path d="M5.5 8V18M8.5 8V18" stroke="#222" stroke-width="1.1"/><path d="M9.5 12.5H13" stroke="#222" stroke-width="1.5"/><path d="M13 19L22 3L24.5 4.5L15.5 20Z" fill="#e8a020"/></svg>
<svg class="a" style="left:306px;top:735px;" width="28" height="26" viewBox="0 0 28 26"><ellipse cx="13" cy="12.5" rx="11" ry="6.5" transform="rotate(-18 13 12.5)" fill="#c8c0c8" stroke="#c83a48" stroke-width="1"/><ellipse cx="13.5" cy="10.5" rx="10.5" ry="6.5" transform="rotate(-18 13.5 10.5)" fill="#f4f0f2" stroke="#d8343b" stroke-width="1.5"/><path d="M7 9L17 15M13.5 5L15.5 14" stroke="#555" stroke-width="1"/><ellipse cx="17.5" cy="19" rx="2.5" ry="4" transform="rotate(-30 17.5 19)" fill="none" stroke="#2a86d0" stroke-width="1.8"/><ellipse cx="22" cy="17.5" rx="2.5" ry="4" transform="rotate(-50 22 17.5)" fill="none" stroke="#2a86d0" stroke-width="1.8"/></svg>
<svg class="a" style="left:880px;top:740px;" width="18" height="17" viewBox="0 0 18 17"><defs><linearGradient id="cg" x1="0" y1="0" x2="1" y2="1"><stop offset="0" stop-color="#2ad02a"/><stop offset=".35" stop-color="#20a0ff"/><stop offset=".6" stop-color="#ff3060"/><stop offset="1" stop-color="#ffd000"/></linearGradient></defs><rect x="1" y="1" width="16" height="12" fill="url(#cg)"/><rect x="0.5" y="0.5" width="17" height="13" fill="none" stroke="#111"/><rect x="6" y="14" width="6" height="2" fill="#111"/></svg>
<svg class="a" style="left:906px;top:740px;" width="17" height="17" viewBox="0 0 17 17"><path d="M1.5 5.5H8.5V15.5H1.5Z" fill="none" stroke="#fff"/><path d="M2.5 0.5H7.5V5.5H2.5Z" fill="none" stroke="#fff"/><path d="M4 2.5H4.8M5.6 2.5H6.4" stroke="#fff"/><path d="M9 13L11 15L16 10" fill="none" stroke="#fff"/></svg>
<svg class="a" style="left:927px;top:740px;" width="20" height="17" viewBox="0 0 20 17"><path d="M1.5 5.5H4.5L9.5 1.5V14.5L4.5 10.5H1.5Z" fill="none" stroke="#fff"/><circle cx="13.5" cy="11.5" r="5" fill="#e81123"/><path d="M11.3 9.3L15.7 13.7M15.7 9.3L11.3 13.7" stroke="#fff" stroke-width="1.3"/></svg>
<div class="t" style="left:959px;top:733.25px;font-size:11.75px;color:#fff;font-weight:normal;">6:56 AM</div>
<div class="t" style="left:956px;top:751.25px;font-size:11.75px;color:#fff;font-weight:normal;">5/29/2023</div>
<div class="a" style="left:753px;top:377px;width:271px;height:280px;background:#eee;border:1px solid #a0a0a0;box-shadow:2px 2px 3px rgba(0,0,0,.35)"></div>
<div class="t" style="left:788px;top:387.25px;font-size:11.75px;color:#000;font-weight:bold;">Open command window here</div>
<div class="t" style="left:788px;top:409.25px;font-size:11.75px;color:#808080;font-weight:normal;">Share</div>
<div class="a" style="left:764px;top:428px;width:250px;height:1px;background:#a0a0a0"></div>
<div class="a" style="left:755px;top:432px;width:266px;height:22px;background:#fff"></div>
<div class="t" style="left:788px;top:438.25px;font-size:11.75px;color:#000;font-weight:normal;">Send to</div>
<div class="t" style="left:788px;top:460.25px;font-size:11.75px;color:#000;font-weight:normal;">Copy To folder...</div>
<div class="t" style="left:788px;top:482.25px;font-size:11.75px;color:#000;font-weight:normal;">Move To folder...</div>
<div class="a" style="left:764px;top:501px;width:250px;height:1px;background:#a0a0a0"></div>
<div class="t" style="left:788px;top:511.25px;font-size:11.75px;color:#000;font-weight:normal;">Cut</div>
<div class="t" style="left:788px;top:533.25px;font-size:11.75px;color:#000;font-weight:normal;">Copy</div>
<div class="a" style="left:764px;top:552px;width:250px;height:1px;background:#a0a0a0"></div>
<div class="t" style="left:788px;top:562.25px;font-size:11.75px;color:#000;font-weight:normal;">Create shortcut</div>
<div class="t" style="left:788px;top:584.25px;font-size:11.75px;color:#000;font-weight:normal;">Delete</div>
<div class="t" style="left:788px;top:606.25px;font-size:11.75px;color:#000;font-weight:normal;">Rename</div>
<div class="a" style="left:764px;top:625px;width:250px;height:1px;background:#a0a0a0"></div>
<div class="t" style="left:788px;top:635.25px;font-size:11.75px;color:#000;font-weight:normal;">Properties</div>
<div class="a" style="left:495px;top:430px;width:261px;height:97px;background:#eee;border:1px solid #a0a0a0;box-shadow:2px 2px 3px rgba(0,0,0,.35)"></div>
<div class="t" style="left:530px;top:440.25px;font-size:11.75px;color:#000;font-weight:normal;">Compressed (zipped) Folder</div>
<div class="t" style="left:530px;top:462.25px;font-size:11.75px;color:#000;font-weight:normal;">Desktop (create shortcut)</div>
<div class="t" style="left:530px;top:484.25px;font-size:11.75px;color:#000;font-weight:normal;">Hiren's BootCD (D:)</div>
<div class="a" style="left:497px;top:500px;width:256px;height:22px;background:#fff"></div>
<div class="t" style="left:530px;top:506.25px;font-size:11.75px;color:#000;font-weight:normal;">NTFS (F:)</div>
<svg class="a" style="left:764px;top:387px;" width="16" height="13" viewBox="0 0 16 13"><rect x="0" y="0" width="16" height="13" fill="#3a3a3a"/><rect x="0.7" y="0.7" width="14.6" height="1.6" fill="#b8b8b8"/><rect x="0.7" y="3" width="14.6" height="9.3" fill="#000"/><path d="M4.5 5.5H2.5V9.5H4.5" fill="none" stroke="#fff" stroke-width="1.1"/><rect x="5.6" y="6" width="1" height="1" fill="#fff"/><rect x="5.6" y="8.5" width="1" height="1" fill="#fff"/><path d="M7.8 5L9.8 9.8" stroke="#fff" stroke-width="1.1"/><path d="M10.5 9.8H13.5" stroke="#fff" stroke-width="1.1"/></svg>
<svg class="a" style="left:763px;top:406px;" width="17" height="15" viewBox="0 0 17 15"><path d="M1.5 6V13.5H13" fill="none" stroke="#444" stroke-width="1.2"/><path d="M4 11C5 7 8 5 12 5V2.5L16 6.5L12 10.5V8C9 8 6 9 4 11Z" fill="none" stroke="#444" stroke-width="1.1"/></svg>
<svg class="a" style="left:1004px;top:436px;" width="9" height="15" viewBox="0 0 9 15"><path d="M1 1L8 7.5L1 14" fill="none" stroke="#333" stroke-width="1.1"/></svg>
<svg class="a" style="left:505px;top:436px;" width="16" height="19" viewBox="0 0 16 19"><path d="M1 1H15V18H1Z" fill="#f5cd5e"/><path d="M1.8 1.8H14.2V17.2H1.8Z" fill="#fbe08e"/><g fill="#6a6a6a"><rect x="7" y="2" width="1.5" height="1"/><rect x="8.5" y="3" width="1.5" height="1"/><rect x="7" y="4" width="1.5" height="1"/><rect x="8.5" y="5" width="1.5" height="1"/><rect x="7" y="6" width="1.5" height="1"/><rect x="8.5" y="7" width="1.5" height="1"/><rect x="7" y="8" width="1.5" height="1"/><rect x="8.5" y="9" width="1.5" height="1"/></g><rect x="6.5" y="10.5" width="4" height="4.5" fill="#fff" stroke="#555" stroke-width="0.9"/></svg>
<svg class="a" style="left:505px;top:461px;" width="17" height="13" viewBox="0 0 17 13"><rect x="0.5" y="0.5" width="16" height="12" fill="#1e90f0" stroke="#1a78d0"/><path d="M2 11H15" stroke="#bfe0ff" stroke-width="0.8" stroke-dasharray="1 1.5"/></svg>
<svg class="a" style="left:505px;top:482px;" width="16" height="16" viewBox="0 0 16 16"><rect x="0.5" y="0.5" width="15" height="15" rx="2" fill="#2c2c2c" stroke="#1a1a1a"/><path d="M5 5L13 13" stroke="#bdbdbd" stroke-width="2.4"/><circle cx="4.5" cy="4.5" r="2.8" fill="#bdbdbd"/><path d="M2.5 2.5L4.8 4.8" stroke="#2c2c2c" stroke-width="1.6"/><path d="M13 3L3 13" stroke="#a8a8a8" stroke-width="1.6"/><path d="M11.5 2L14 4.5L12 6L10 4Z" fill="#d0d0d0"/></svg>
<svg class="a" style="left:507px;top:509px;" width="14" height="8" viewBox="0 0 14 8"><path d="M1.5 0.5H12.5L13.8 3H0.2Z" fill="#bdbdbd"/><rect x="0" y="3" width="14" height="5" rx="0.8" fill="#434343"/><rect x="10" y="4.8" width="2.2" height="1.4" fill="#e0e0e0"/></svg>
</body></html>
